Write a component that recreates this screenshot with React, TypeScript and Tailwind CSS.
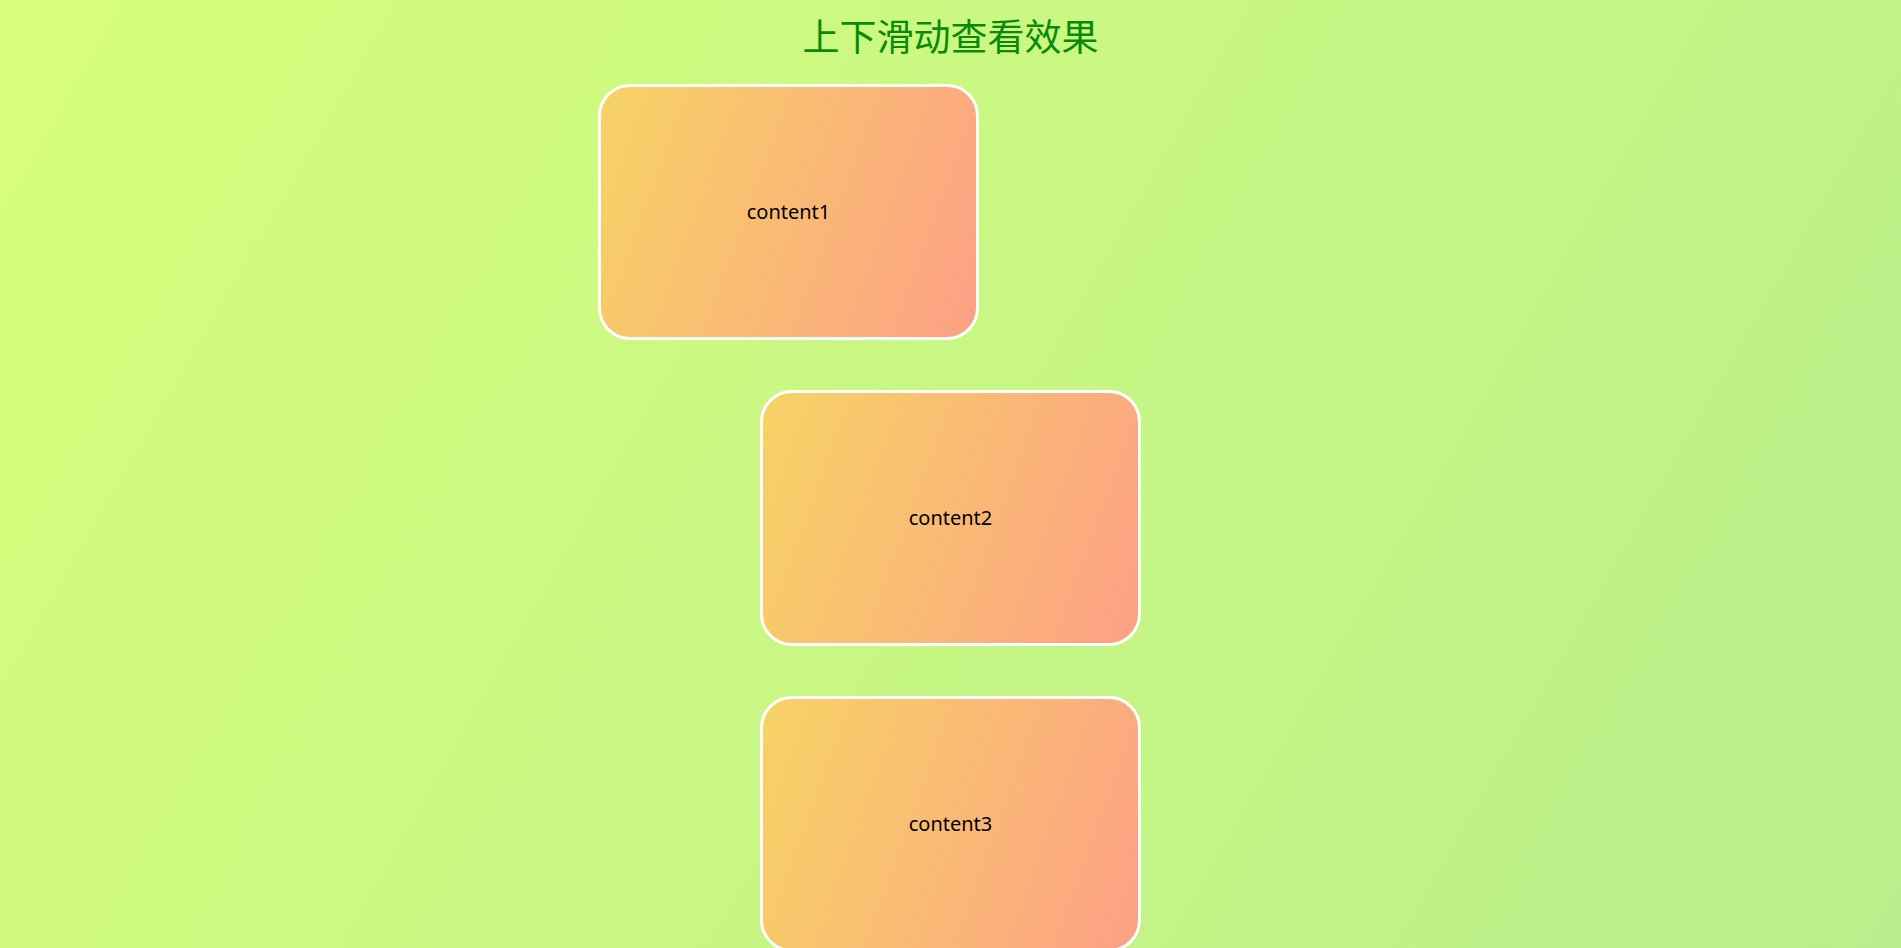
export default function App() {
  const cards = ["content1", "content2", "content3"];

  return (
    <div
      className="h-screen overflow-hidden bg-[linear-gradient(120deg,#d7fe7b_0%,#b8ef8c_100%)]"
      style={{ fontFamily: '"Noto Sans", "Noto Sans CJK SC", sans-serif' }}
    >
      <div className="flex flex-col items-center">
        <h1 className="pt-[10px] pb-[20px] text-[37px] leading-[54px] font-normal text-[#0a8a0a]">
          上下滑动查看效果
        </h1>

        {cards.map((label, i) => (
          <div
            key={label}
            className={`mb-[50px] flex h-[256px] w-[381px] shrink-0 items-center justify-center rounded-[32px] border-[3px] border-white bg-[linear-gradient(110deg,#f6d365_0%,#fda085_100%)] ${
              i === 0 ? "mr-[324px]" : ""
            }`}
          >
            <span className="text-[20px] text-black">{label}</span>
          </div>
        ))}
      </div>
    </div>
  );
}
